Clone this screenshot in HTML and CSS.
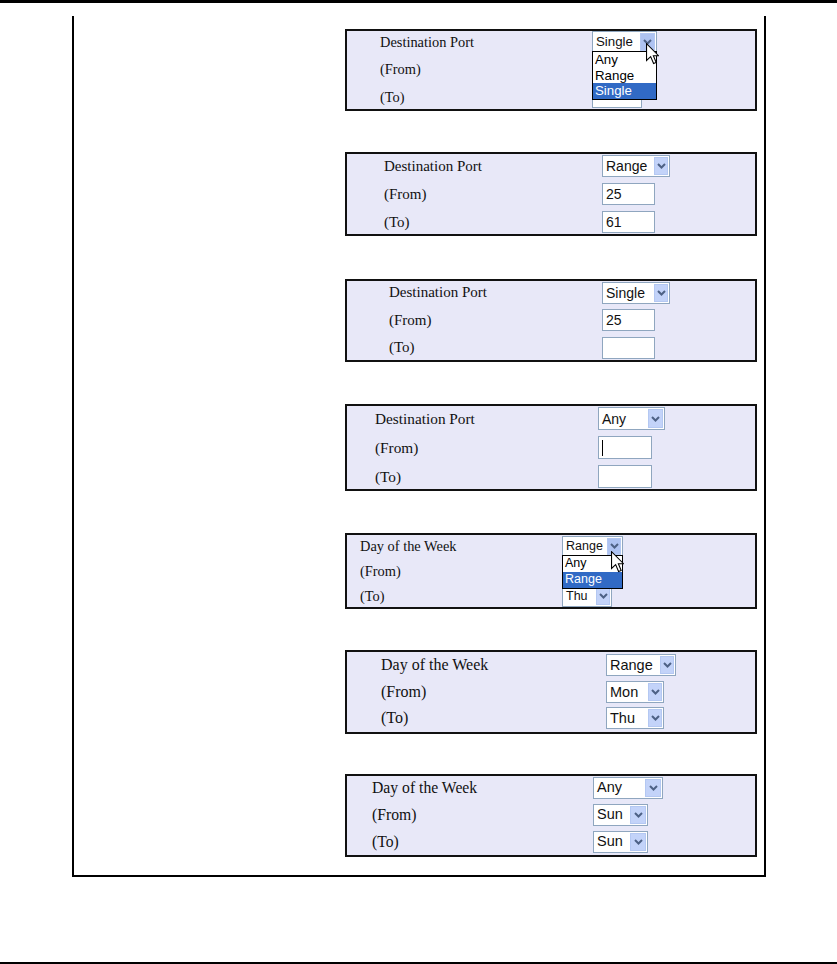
FILE: index.html
```html
<!DOCTYPE html>
<html>
<head>
<meta charset="utf-8">
<title>Port and Day selection</title>
<link rel="stylesheet" href="styles.css">
</head>
<body>
<div class="topline"></div>
<div class="frame">
  <div class="panel p1">
    <div class="rows">
      <div class="lbl">Destination Port</div>
      <div class="ctrl">
        <div class="sel wide open"><span class="val">Single</span><span class="arrow"><svg width="9" height="6" viewBox="0 0 9 6"><polyline points="1,1 4.5,4.5 8,1" fill="none" stroke="#4d6185" stroke-width="2"/></svg></span>
          <div class="list"><div class="it">Any</div><div class="it">Range</div><div class="it hl">Single</div></div>
          <svg class="cursor" width="13" height="22" viewBox="0 0 12 20"><path d="M0.5 0.5 L0.5 16 L4.3 12.4 L7 18.8 L9.4 17.8 L6.8 11.6 L11.6 11.6 Z" fill="#fff" stroke="#000" stroke-width="1" stroke-linejoin="miter"/></svg>
        </div>
      </div>
      <div class="lbl">(From)</div>
      <div class="ctrl"><div class="inp narrow"></div></div>
      <div class="lbl">(To)</div>
      <div class="ctrl"><div class="inp narrow"></div></div>
    </div>
  </div>

  <div class="panel p2">
    <div class="rows">
      <div class="lbl">Destination Port</div>
      <div class="ctrl"><div class="sel wide"><span class="val">Range</span><span class="arrow"><svg width="9" height="6" viewBox="0 0 9 6"><polyline points="1,1 4.5,4.5 8,1" fill="none" stroke="#4d6185" stroke-width="2"/></svg></span></div></div>
      <div class="lbl">(From)</div>
      <div class="ctrl"><div class="inp narrow">25</div></div>
      <div class="lbl">(To)</div>
      <div class="ctrl"><div class="inp narrow">61</div></div>
    </div>
  </div>

  <div class="panel p3">
    <div class="rows">
      <div class="lbl">Destination Port</div>
      <div class="ctrl"><div class="sel wide"><span class="val">Single</span><span class="arrow"><svg width="9" height="6" viewBox="0 0 9 6"><polyline points="1,1 4.5,4.5 8,1" fill="none" stroke="#4d6185" stroke-width="2"/></svg></span></div></div>
      <div class="lbl">(From)</div>
      <div class="ctrl"><div class="inp narrow">25</div></div>
      <div class="lbl">(To)</div>
      <div class="ctrl"><div class="inp narrow"></div></div>
    </div>
  </div>

  <div class="panel p4">
    <div class="rows">
      <div class="lbl">Destination Port</div>
      <div class="ctrl"><div class="sel wide"><span class="val">Any</span><span class="arrow"><svg width="9" height="6" viewBox="0 0 9 6"><polyline points="1,1 4.5,4.5 8,1" fill="none" stroke="#4d6185" stroke-width="2"/></svg></span></div></div>
      <div class="lbl">(From)</div>
      <div class="ctrl"><div class="inp narrow"><span class="caret"></span></div></div>
      <div class="lbl">(To)</div>
      <div class="ctrl"><div class="inp narrow"></div></div>
    </div>
  </div>

  <div class="panel p5">
    <div class="rows">
      <div class="lbl">Day of the Week</div>
      <div class="ctrl">
        <div class="sel wide open"><span class="val">Range</span><span class="arrow"><svg width="9" height="6" viewBox="0 0 9 6"><polyline points="1,1 4.5,4.5 8,1" fill="none" stroke="#4d6185" stroke-width="2"/></svg></span>
          <div class="list"><div class="it">Any</div><div class="it hl">Range</div></div>
          <svg class="cursor" width="13" height="22" viewBox="0 0 12 20"><path d="M0.5 0.5 L0.5 16 L4.3 12.4 L7 18.8 L9.4 17.8 L6.8 11.6 L11.6 11.6 Z" fill="#fff" stroke="#000" stroke-width="1" stroke-linejoin="miter"/></svg>
        </div>
      </div>
      <div class="lbl">(From)</div>
      <div class="ctrl"><div class="sel narrow"></div></div>
      <div class="lbl">(To)</div>
      <div class="ctrl"><div class="sel narrow"><span class="val">Thu</span><span class="arrow"><svg width="9" height="6" viewBox="0 0 9 6"><polyline points="1,1 4.5,4.5 8,1" fill="none" stroke="#4d6185" stroke-width="2"/></svg></span></div></div>
    </div>
  </div>

  <div class="panel p6">
    <div class="rows">
      <div class="lbl">Day of the Week</div>
      <div class="ctrl"><div class="sel wide"><span class="val">Range</span><span class="arrow"><svg width="9" height="6" viewBox="0 0 9 6"><polyline points="1,1 4.5,4.5 8,1" fill="none" stroke="#4d6185" stroke-width="2"/></svg></span></div></div>
      <div class="lbl">(From)</div>
      <div class="ctrl"><div class="sel narrow"><span class="val">Mon</span><span class="arrow"><svg width="9" height="6" viewBox="0 0 9 6"><polyline points="1,1 4.5,4.5 8,1" fill="none" stroke="#4d6185" stroke-width="2"/></svg></span></div></div>
      <div class="lbl">(To)</div>
      <div class="ctrl"><div class="sel narrow"><span class="val">Thu</span><span class="arrow"><svg width="9" height="6" viewBox="0 0 9 6"><polyline points="1,1 4.5,4.5 8,1" fill="none" stroke="#4d6185" stroke-width="2"/></svg></span></div></div>
    </div>
  </div>

  <div class="panel p7">
    <div class="rows">
      <div class="lbl">Day of the Week</div>
      <div class="ctrl"><div class="sel wide"><span class="val">Any</span><span class="arrow"><svg width="9" height="6" viewBox="0 0 9 6"><polyline points="1,1 4.5,4.5 8,1" fill="none" stroke="#4d6185" stroke-width="2"/></svg></span></div></div>
      <div class="lbl">(From)</div>
      <div class="ctrl"><div class="sel narrow"><span class="val">Sun</span><span class="arrow"><svg width="9" height="6" viewBox="0 0 9 6"><polyline points="1,1 4.5,4.5 8,1" fill="none" stroke="#4d6185" stroke-width="2"/></svg></span></div></div>
      <div class="lbl">(To)</div>
      <div class="ctrl"><div class="sel narrow"><span class="val">Sun</span><span class="arrow"><svg width="9" height="6" viewBox="0 0 9 6"><polyline points="1,1 4.5,4.5 8,1" fill="none" stroke="#4d6185" stroke-width="2"/></svg></span></div></div>
    </div>
  </div>
</div>
<div class="bottomline"></div>
</body>
</html>
```

FILE: styles.css
```css
* { box-sizing: border-box; }

body {
  margin: 0;
  background: #ffffff;
  font-family: "Liberation Serif", "Times New Roman", serif;
  color: #111111;
}

.topline {
  height: 3px;
  background: #000000;
}

.bottomline {
  height: 2px;
  background: #000000;
  margin-top: 85px;
}

.frame {
  margin: 13px 0 0 72px;
  width: 694px;
  height: 861px;
  border: 2px solid #000000;
  border-top: none;
  padding: 13px 0 0 271px;
}

.panel {
  width: 412px;
  height: var(--h);
  margin-top: var(--mt);
  border: 2px solid #111111;
  background: #e8e8f8;
  position: relative;
}

.rows {
  display: grid;
  grid-template-columns: var(--lw) auto;
  grid-auto-rows: var(--rh);
  align-items: center;
  margin-top: var(--m);
  padding-left: var(--pl);
  font-size: var(--fs);
}

.lbl {
  white-space: nowrap;
  line-height: 1;
}

.ctrl {
  display: flex;
  align-items: center;
}

.sel,
.inp {
  position: relative;
  display: flex;
  align-items: center;
  height: var(--ch);
  background: #ffffff;
  border: 1px solid #8fa6bf;
  font-family: "Liberation Sans", Arial, sans-serif;
  font-size: var(--cfs);
  color: #111111;
  padding-left: 3px;
  line-height: 1;
}

.wide { width: var(--sw); }
.narrow { width: var(--nw); }

.arrow {
  position: absolute;
  right: 1px;
  top: 1px;
  bottom: 1px;
  width: var(--bw);
  background: #c3d3f9;
  border: 1px solid #b4c8f2;
  display: flex;
  align-items: center;
  justify-content: center;
}

.open .arrow {
  background: #aec3f2;
}

.list {
  position: absolute;
  top: 100%;
  left: -1px;
  right: -1px;
  margin-top: -1px;
  background: #ffffff;
  border: 1px solid #000000;
  z-index: 2;
  font-size: var(--cfs);
}

.it {
  height: var(--ih);
  display: flex;
  align-items: center;
  padding-left: 2px;
  color: #000000;
}

.it.hl {
  background: #316ac5;
  color: #ffffff;
}

.cursor {
  position: absolute;
  left: var(--cx);
  top: var(--cy);
  z-index: 3;
}

.caret {
  width: 1px;
  height: 16px;
  background: #000000;
}

.p1 { --h: 82px; --mt: 0px; --m: -3px; --rh: 27.5px; --pl: 33px; --lw: 212px; --fs: 14.4px; --cfs: 13.3px; --sw: 65px; --nw: 50px; --ch: 22px; --bw: 15px; --ih: 15.7px; --cx: 53px; --cy: 11px; }
.p2 { --h: 84px; --mt: 41px; --m: -2px; --rh: 28px; --pl: 37px; --lw: 218px; --fs: 15px; --cfs: 14px; --sw: 68px; --nw: 53px; --ch: 22px; --bw: 14px; }
.p3 { --h: 83px; --mt: 43px; --m: -2.25px; --rh: 27.5px; --pl: 42px; --lw: 213px; --fs: 15px; --cfs: 14px; --sw: 68px; --nw: 53px; --ch: 22px; --bw: 14px; }
.p4 { --h: 87px; --mt: 42px; --m: -2px; --rh: 29px; --pl: 28px; --lw: 223px; --fs: 15.3px; --cfs: 14px; --sw: 67px; --nw: 54px; --ch: 23px; --bw: 15px; }
.p5 { --h: 76px; --mt: 42px; --m: -1.5px; --rh: 25px; --pl: 13px; --lw: 202px; --fs: 14.4px; --cfs: 12.5px; --sw: 61px; --nw: 50px; --ch: 21px; --bw: 14px; --ih: 16px; --cx: 48px; --cy: 14px; }
.p6 { --h: 84px; --mt: 41px; --m: 0px; --rh: 26.5px; --pl: 34px; --lw: 225px; --fs: 16px; --cfs: 14.5px; --sw: 70px; --nw: 58px; --ch: 22px; --bw: 14px; }
.p7 { --h: 83px; --mt: 40px; --m: -2px; --rh: 27px; --pl: 25px; --lw: 221px; --fs: 15.7px; --cfs: 14.5px; --sw: 70px; --nw: 55px; --ch: 22px; --bw: 16px; }
```
